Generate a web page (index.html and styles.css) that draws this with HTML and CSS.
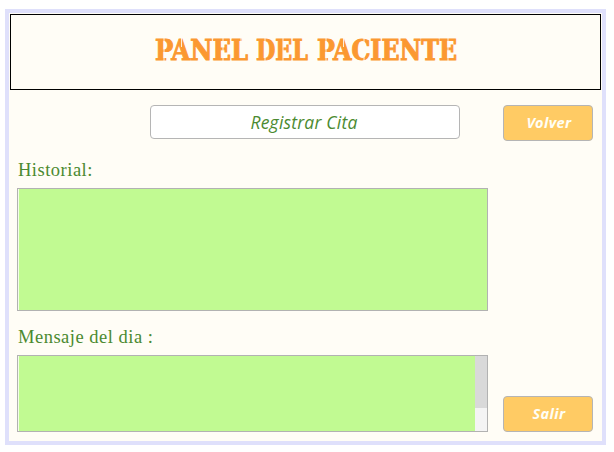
FILE: index.html
```html
<!DOCTYPE html>
<html lang="es">
<head>
<meta charset="utf-8">
<title>Panel del paciente</title>
<link rel="stylesheet" href="styles.css">
</head>
<body>
<main class="panel">
  <header class="header">
    <svg class="title" width="320" height="40" viewBox="0 0 320 40">
      <text y="28" x="4" textLength="93" lengthAdjust="spacingAndGlyphs">PANEL</text>
      <text y="28" x="105" textLength="52" lengthAdjust="spacingAndGlyphs">DEL</text>
      <text y="28" x="166" textLength="140" lengthAdjust="spacingAndGlyphs">PACIENTE</text>
      <path class="cuts" d="M13 6v23M30.500 6v9M72 6v23M90 6v3M114 6v23M132 6v23M175 6v23M192.500 6v9M213 6v6M213 24v6M249 6v23M297 6v23"/>
    </svg>
  </header>
  <div class="content">
    <button class="register">Registrar Cita</button>
    <section class="history">
      <h2>Historial:</h2>
      <div class="box"></div>
    </section>
    <section class="message">
      <h2>Mensaje del dia :</h2>
      <div class="box"><div class="track"><div class="thumb"></div></div></div>
    </section>
    <nav class="actions">
      <button>Volver</button>
      <button>Salir</button>
    </nav>
  </div>
</main>
</body>
</html>
```
FILE: styles.css
```css
* { box-sizing: border-box; }
body { margin: 0; padding: 9px 8px 7px 5px; background: #fff; }
.panel {
  width: 601px;
  height: 436px;
  border: 4px solid #dfe0fb;
  padding: 1px;
  background: #fffdf6;
}
.header {
  height: 76px;
  border: 1px solid #000;
  padding: 16.5px 0 0 140px;
}
.title { display: block; overflow: visible; }
.title text {
  font: bold 27.5px "DejaVu Serif Condensed", "DejaVu Serif", serif;
  font-stretch: condensed;
  fill: #fb9831;
  stroke: #fb9831;
  stroke-width: 0.9px;
}
.cuts { stroke: #fffdf6; stroke-width: 1; opacity: 0.85; }
.content {
  display: grid;
  grid-template-columns: 471px 90px;
  grid-template-rows: 34px 172px 121px;
  column-gap: 15px;
  padding: 15px 8px 0 7px;
}
button {
  padding: 0;
  border: 1px solid #b5b5b5;
  border-radius: 4px;
  font-family: "Noto Sans", sans-serif;
  font-style: italic;
}
.register {
  width: 310px;
  height: 34px;
  margin-left: 133px;
  padding-right: 2px;
  background: #fff;
  color: #4b8a30;
  font-family: "Open Sans", "Noto Sans", sans-serif;
  font-size: 17.5px;
  letter-spacing: 0.2px;
}
.history, .message { grid-column: 1; display: flex; flex-direction: column; }
h2 {
  margin: 0 0 0 1px;
  color: #4b8a30;
  font: 18.5px/24px "Liberation Serif", serif;
  letter-spacing: 0.5px;
}
.history h2 { height: 30px; margin-top: 19px; }
.message h2 { height: 30px; margin-top: 14px; }
.box {
  height: 123px;
  border: 1px solid #b2b2b2;
  background: #c1fa92;
  box-shadow: inset 1px 0 #f4fde9;
}
.message .box { height: 77px; display: flex; justify-content: flex-end; }
.track { width: 12px; background: #f4f4f4; }
.thumb { height: 52px; background: #d9d9d9; }
.actions {
  grid-column: 2;
  grid-row: 1 / 4;
  display: flex;
  flex-direction: column;
  justify-content: space-between;
}
.actions button {
  height: 36px;
  background: #ffcb64;
  color: #fffef5;
  font-size: 14.5px;
  font-weight: bold;
  letter-spacing: 0.4px;
  padding: 0 0 2px 2px;
}
```
